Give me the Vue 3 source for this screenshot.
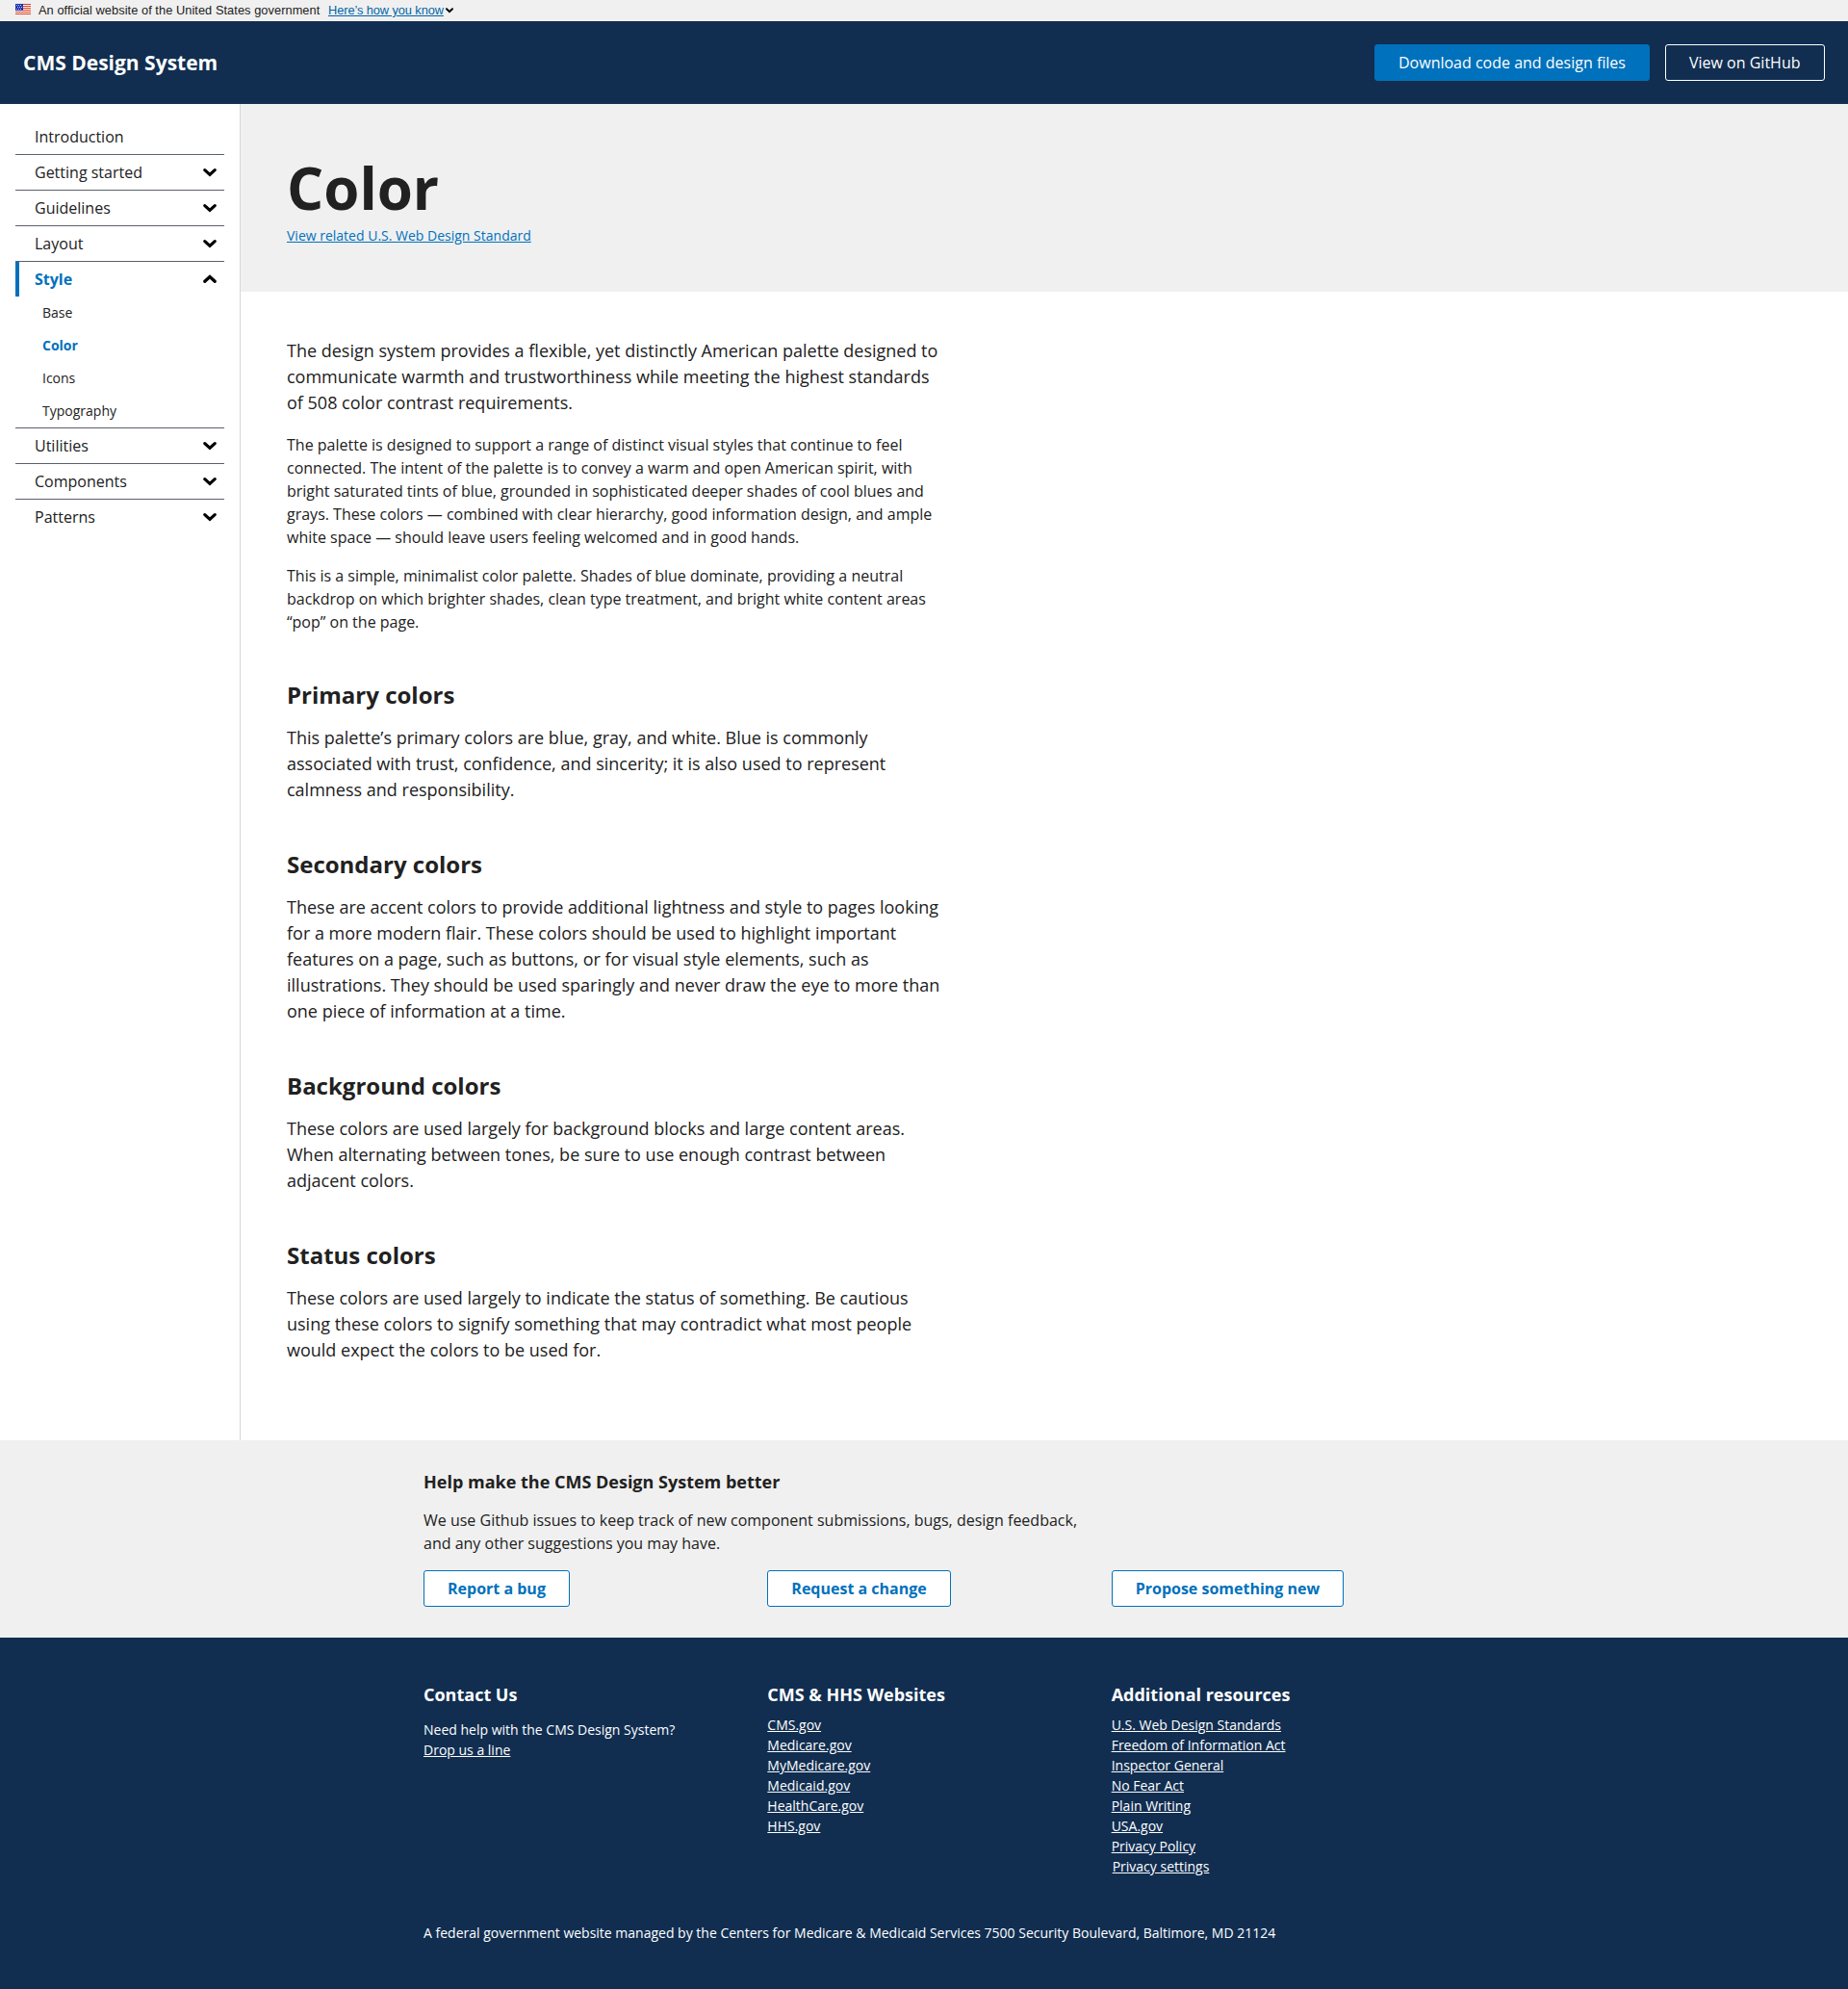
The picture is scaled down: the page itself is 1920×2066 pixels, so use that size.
<script setup>
const nav = [
  { label: 'Introduction' },
  { label: 'Getting started', expandable: true },
  { label: 'Guidelines', expandable: true },
  { label: 'Layout', expandable: true },
  {
    label: 'Style',
    expandable: true,
    open: true,
    children: ['Base', 'Color', 'Icons', 'Typography'],
  },
  { label: 'Utilities', expandable: true },
  { label: 'Components', expandable: true },
  { label: 'Patterns', expandable: true },
]
const sections = [
  {
    title: 'Primary colors',
    text: 'This palette’s primary colors are blue, gray, and white. Blue is commonly associated with trust, confidence, and sincerity; it is also used to represent calmness and responsibility.',
  },
  {
    title: 'Secondary colors',
    text: 'These are accent colors to provide additional lightness and style to pages looking for a more modern flair. These colors should be used to highlight important features on a page, such as buttons, or for visual style elements, such as illustrations. They should be used sparingly and never draw the eye to more than one piece of information at a time.',
  },
  {
    title: 'Background colors',
    text: 'These colors are used largely for background blocks and large content areas. When alternating between tones, be sure to use enough contrast between adjacent colors.',
  },
  {
    title: 'Status colors',
    text: 'These colors are used largely to indicate the status of something. Be cautious using these colors to signify something that may contradict what most people would expect the colors to be used for.',
  },
]
const feedback = ['Report a bug', 'Request a change', 'Propose something new']
const sites = ['CMS.gov', 'Medicare.gov', 'MyMedicare.gov', 'Medicaid.gov', 'HealthCare.gov', 'HHS.gov']
const resources = [
  'U.S. Web Design Standards',
  'Freedom of Information Act',
  'Inspector General',
  'No Fear Act',
  'Plain Writing',
  'USA.gov',
  'Privacy Policy',
]
</script>

<template>
  <div class="page">
    <div class="banner">
      <svg class="flag" width="16" height="11" viewBox="0 0 16 11" shape-rendering="crispEdges">
        <rect width="16" height="11" fill="#fff" />
        <path d="M0 0h16v1H0zM0 2h16v1H0zM0 4h16v1H0zM0 6h16v1H0zM0 8h16v1H0zM0 10h16v1H0z" fill="#db3e1f" />
        <rect width="8" height="7" fill="#1e33b1" />
        <path d="M1 1h1v1H1zM3 1h1v1H3zM5 1h1v1H5zM2 3h1v1H2zM4 3h1v1H4zM6 3h1v1H6zM1 5h1v1H1zM3 5h1v1H3zM5 5h1v1H5z" fill="#c5cbee" />
      </svg>
      <span class="banner-text">An official website of the United States government</span>
      <a class="banner-link">Here’s how you know</a>
      <svg class="banner-chevron" width="8" height="6" viewBox="0 0 8 6">
        <path d="M1 1.3 4 4.2 7 1.3" />
      </svg>
    </div>

    <header class="header">
      <span class="brand">CMS Design System</span>
      <div class="header-actions">
        <a class="button solid">Download code and design files</a>
        <a class="button ghost">View on GitHub</a>
      </div>
    </header>

    <div class="body">
      <aside class="sidebar">
        <ul class="nav">
          <li v-for="item in nav" :key="item.label">
            <a class="nav-link" :class="{ current: item.open }">
              <span>{{ item.label }}</span>
              <svg v-if="item.expandable" class="chevron" width="14" height="10" viewBox="0 0 14 10">
                <path :d="item.open ? 'M1.8 7.3 7 2.5l5.2 4.8' : 'M1.8 2.6 7 7.4l5.2-4.8'" />
              </svg>
            </a>
            <ul v-if="item.children" class="subnav">
              <li v-for="child in item.children" :key="child" :class="{ selected: child === 'Color' }">{{ child }}</li>
            </ul>
          </li>
        </ul>
      </aside>

      <main class="main">
        <div class="hero">
          <h1>Color</h1>
          <a>View related U.S. Web Design Standard</a>
        </div>
        <article class="content">
          <p class="lead">The design system provides a flexible, yet distinctly American palette designed to communicate warmth and trustworthiness while meeting the highest standards of 508 color contrast requirements.</p>
          <p>The palette is designed to support a range of distinct visual styles that continue to feel connected. The intent of the palette is to convey a warm and open American spirit, with bright saturated tints of blue, grounded in sophisticated deeper shades of cool blues and grays. These colors — combined with clear hierarchy, good information design, and ample white space — should leave users feeling welcomed and in good hands.</p>
          <p>This is a simple, minimalist color palette. Shades of blue dominate, providing a neutral backdrop on which brighter shades, clean type treatment, and bright white content areas “pop” on the page.</p>
          <section v-for="section in sections" :key="section.title">
            <h2>{{ section.title }}</h2>
            <p class="lead">{{ section.text }}</p>
          </section>
        </article>
      </main>
    </div>

    <div class="feedback">
      <div class="container">
        <h3>Help make the CMS Design System better</h3>
        <p>We use Github issues to keep track of new component submissions, bugs, design feedback, and any other suggestions you may have.</p>
        <div class="columns">
          <div v-for="label in feedback" :key="label">
            <a class="button outline">{{ label }}</a>
          </div>
        </div>
      </div>
    </div>

    <footer class="footer">
      <div class="container">
        <div class="columns">
          <div>
            <h3>Contact Us</h3>
            <p class="contact">Need help with the CMS Design System?<br /><a>Drop us a line</a></p>
          </div>
          <div>
            <h3>CMS &amp; HHS Websites</h3>
            <ul>
              <li v-for="site in sites" :key="site"><a>{{ site }}</a></li>
            </ul>
          </div>
          <div>
            <h3>Additional resources</h3>
            <ul>
              <li v-for="resource in resources" :key="resource"><a>{{ resource }}</a></li>
              <li class="settings"><a>Privacy settings</a></li>
            </ul>
          </div>
        </div>
        <p class="address">A federal government website managed by the Centers for Medicare &amp; Medicaid Services 7500 Security Boulevard, Baltimore, MD 21124</p>
      </div>
    </footer>
  </div>
</template>

<style>
body {
  margin: 0;
}
</style>

<style scoped>
.page {
  height: 2066px;
  display: flex;
  flex-direction: column;
  background: #fff;
  color: #212121;
  font-family: 'Open Sans', 'Noto Sans', sans-serif;
  font-size: 16px;
  line-height: 24px;
}
h1,
h2,
h3,
p,
ul {
  margin: 0;
  padding: 0;
}
ul {
  list-style: none;
}
.banner {
  height: 22px;
  flex: none;
  display: flex;
  padding-left: 16px;
  background: #f0f0f0;
  font: 12.8px/21px 'Liberation Sans', Arial, sans-serif;
}
.flag {
  margin: 4px 8px 0 0;
}
.banner-text {
  width: 301px;
  white-space: nowrap;
  letter-spacing: 0.06px;
}
.banner-link {
  color: #0065a8;
  text-decoration: underline;
  white-space: nowrap;
  width: 121px;
  letter-spacing: -0.08px;
}
.banner-chevron {
  margin: 8px 0 0 1px;
}
.banner-chevron path,
.chevron path {
  fill: none;
  stroke: #000;
  stroke-width: 2;
  stroke-linecap: round;
}
.chevron path {
  stroke-width: 3.2;
}
.header {
  height: 86px;
  flex: none;
  box-sizing: border-box;
  padding: 0 24px;
  display: flex;
  align-items: center;
  justify-content: space-between;
  background: #112e51;
  color: #fff;
}
.brand {
  font-size: 21px;
  font-weight: 700;
}
.header-actions {
  display: flex;
  gap: 16px;
}
.button {
  display: inline-block;
  box-sizing: border-box;
  height: 38px;
  padding: 0 24px;
  border: 1px solid;
  border-radius: 3px;
  line-height: 36px;
  white-space: nowrap;
}
.solid {
  width: 286px;
  background: #0071bc;
  border-color: #0071bc;
}
.ghost {
  width: 166px;
}
.outline {
  background: #fff;
  color: #0071bc;
  font-weight: 700;
}
.body {
  height: 1388px;
  flex: none;
  display: flex;
}
.sidebar {
  width: 250px;
  flex: none;
  box-sizing: border-box;
  padding: 16px;
  border-right: 1px solid #d6d7d9;
}
.nav > li + li {
  border-top: 1px solid #5b616b;
}
.nav-link {
  height: 36px;
  box-sizing: border-box;
  padding: 0 8px 0 16px;
  border-left: 4px solid transparent;
  display: flex;
  align-items: center;
  justify-content: space-between;
}
.current {
  border-left-color: #0071bc;
  color: #0071bc;
  font-weight: 700;
}
.subnav {
  padding-left: 28px;
  font-size: 14px;
  line-height: 34px;
}
.selected {
  color: #0071bc;
  font-weight: 700;
}
.main {
  flex: 1;
}
.hero {
  height: 195px;
  box-sizing: border-box;
  padding: 48px 48px 0;
  background: #f0f0f0;
}
.hero h1 {
  font-size: 60px;
  line-height: 78px;
}
.hero a {
  display: block;
  font-size: 14px;
  line-height: 21px;
  color: #0071bc;
  text-decoration: underline;
}
.content {
  width: 682px;
  padding: 48px;
}
.content > p {
  margin-bottom: 16px;
}
.content > .lead {
  margin-bottom: 18px;
}
.lead {
  font-size: 18px;
  line-height: 27px;
}
.content section {
  margin-top: 47.8px;
}
h2 {
  font-size: 24px;
  line-height: 31.2px;
  margin-bottom: 16px;
}
h3 {
  font-size: 18px;
  line-height: 23.4px;
}
.container {
  width: 1040px;
  margin: 0 auto;
}
.columns {
  display: grid;
  grid-template-columns: repeat(3, 1fr);
  column-gap: 32px;
}
.feedback {
  height: 205px;
  flex: none;
  box-sizing: border-box;
  padding-top: 32px;
  background: #f0f0f0;
}
.feedback p {
  width: 682px;
  margin: 16px 0;
}
.footer {
  flex: 1;
  padding-top: 48px;
  background: #112e51;
  color: #fff;
  font-size: 14px;
  line-height: 21px;
}
.footer a {
  text-decoration: underline;
}
.footer ul {
  margin-top: 9px;
}
.contact {
  margin-top: 13.6px;
}
.settings {
  padding-left: 1px;
}
.address {
  margin-top: 48px;
}
</style>
